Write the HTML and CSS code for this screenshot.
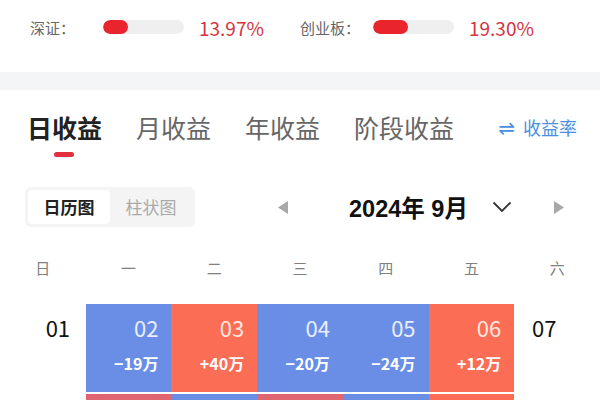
FILE: index.html
```html
<!DOCTYPE html>
<html lang="zh-CN">
<head>
    <meta charset="UTF-8">
    <meta name="viewport" content="width=device-width, initial-scale=1.0">
    <title>收益日历</title>
    <link rel="stylesheet" href="styles.css">
</head>
<body>
    <section class="index-row">
        <div class="index-item">
            <span class="index-label">深证：</span>
            <span class="index-bar"><span class="index-fill" style="width: 31%"></span></span>
            <span class="index-pct">13.97%</span>
        </div>
        <div class="index-item">
            <span class="index-label">创业板：</span>
            <span class="index-bar"><span class="index-fill" style="width: 43%"></span></span>
            <span class="index-pct">19.30%</span>
        </div>
    </section>

    <div class="divider"></div>

    <nav class="tabs">
        <div class="tab active">日收益<span class="tab-line"></span></div>
        <div class="tab">月收益</div>
        <div class="tab">年收益</div>
        <div class="tab">阶段收益</div>
        <div class="rate-switch"><span class="rate-icon">⇌</span>收益率</div>
    </nav>

    <div class="toolbar">
        <div class="seg">
            <span class="seg-item active">日历图</span>
            <span class="seg-item">柱状图</span>
        </div>
        <div class="month-nav">
            <svg class="arrow prev" width="11" height="13" viewBox="0 0 11 13"><polygon points="10,0 10,13 0,6.5" fill="#a8a8a8"/></svg>
            <span class="month-title">2024年 9月</span>
            <svg class="chevron" width="20" height="12" viewBox="0 0 20 12"><polyline points="1.5,1.5 10,10 18.5,1.5" fill="none" stroke="#333" stroke-width="1.8"/></svg>
            <svg class="arrow next" width="11" height="13" viewBox="0 0 11 13"><polygon points="0,0 0,13 10,6.5" fill="#a8a8a8"/></svg>
        </div>
    </div>

    <div class="week">
        <span>日</span><span>一</span><span>二</span><span>三</span><span>四</span><span>五</span><span>六</span>
    </div>

    <div class="days">
        <div class="day plain first">01</div>
        <div class="day loss"><span class="day-num">02</span><span class="day-val">−19万</span></div>
        <div class="day gain"><span class="day-num">03</span><span class="day-val">+40万</span></div>
        <div class="day loss"><span class="day-num">04</span><span class="day-val">−20万</span></div>
        <div class="day loss"><span class="day-num">05</span><span class="day-val">−24万</span></div>
        <div class="day gain"><span class="day-num">06</span><span class="day-val">+12万</span></div>
        <div class="day plain last">07</div>

        <!-- next week, only its top edge is on screen -->
        <div class="day"></div>
        <div class="day big-gain"></div>
        <div class="day loss"></div>
        <div class="day big-gain"></div>
        <div class="day loss"></div>
        <div class="day gain"></div>
        <div class="day"></div>
    </div>
</body>
</html>
```

FILE: styles.css
```css
html, body {
    overflow: hidden;
}
body {
    margin: 0;
    background-color: #fff;
    color: #222;
    font-family: "Noto Sans CJK SC", "Noto Sans", sans-serif;
}
.index-row {
    display: flex;
    align-items: center;
    height: 54px;
    padding: 0 0 18px 30px;
}
.index-item {
    display: flex;
    align-items: center;
    width: 270px;
}
.index-label {
    width: 73px;
    font-size: 15px;
    color: #666;
}
.index-bar {
    width: 81px;
    height: 14px;
    border-radius: 7px;
    background-color: #efefef;
    overflow: hidden;
}
.index-fill {
    display: block;
    height: 100%;
    border-radius: 7px;
    background-color: #e9242d;
}
.index-pct {
    margin-left: 15px;
    font-size: 19px;
    color: #d73340;
}
.divider {
    height: 18px;
    background-color: #f4f5f7;
}
.tabs {
    display: flex;
    align-items: center;
    gap: 34px;
    padding: 19px 23px 0 27px;
    height: 36px;
}
.tab {
    position: relative;
    font-size: 25px;
    line-height: 36px;
    color: #666;
}
.tab.active {
    font-weight: bold;
    color: #222;
}
.tab-line {
    position: absolute;
    left: 27px;
    top: 43px;
    width: 20px;
    height: 5px;
    border-radius: 3px;
    background-color: #e0303e;
}
.rate-switch {
    margin-left: auto;
    font-size: 18px;
    color: #4a8fe0;
}
.rate-icon {
    margin-right: 8px;
    font-family: "DejaVu Sans", sans-serif;
    font-size: 20px;
}
.toolbar {
    display: flex;
    align-items: center;
    margin-top: 42px;
    padding-left: 25px;
}
.seg {
    display: flex;
    padding: 3px;
    border-radius: 6px;
    background-color: #f4f4f5;
}
.seg-item {
    width: 82px;
    height: 34px;
    line-height: 34px;
    text-align: center;
    font-size: 17px;
    color: #aaa;
}
.seg-item.active {
    background-color: #fff;
    border-radius: 4px;
    font-weight: bold;
    color: #222;
}
.month-nav {
    display: flex;
    align-items: center;
    margin-left: 83px;
}
.month-title {
    margin-left: 60px;
    font-family: "Liberation Sans", "Noto Sans CJK SC", sans-serif;
    font-size: 23.5px;
    font-weight: bold;
    color: #111;
}
.chevron {
    margin-left: 24px;
}
.arrow.next {
    margin-left: 42px;
}
.week {
    display: grid;
    grid-template-columns: repeat(7, 1fr);
    margin-top: 31px;
    font-size: 15px;
    line-height: 20px;
    color: #808080;
    text-align: center;
}
.days {
    display: grid;
    grid-template-columns: repeat(7, 1fr);
    grid-auto-rows: 88px;
    row-gap: 2px;
    margin-top: 26px;
}
.day {
    display: flex;
    flex-direction: column;
    align-items: flex-end;
    padding: 7px 13px 0 0;
    color: #fff;
}
.day-num {
    font-size: 22px;
    line-height: 32px;
    color: #e8eeff;
}
.day-val {
    margin-top: 8px;
    font-size: 16px;
    font-weight: bold;
    line-height: 24px;
}
.day.plain {
    align-items: center;
    padding-right: 0;
    font-size: 22px;
    line-height: 32px;
    color: #111;
}
.day.plain.first {
    padding-left: 30px;
}
.day.plain.last {
    padding-right: 26px;
}
.loss {
    background-color: #6a8ee6;
}
.gain {
    background-color: #fc6d55;
}
.gain .day-num {
    color: #ffe6de;
}
.big-gain {
    background-color: #df6570;
}
```
